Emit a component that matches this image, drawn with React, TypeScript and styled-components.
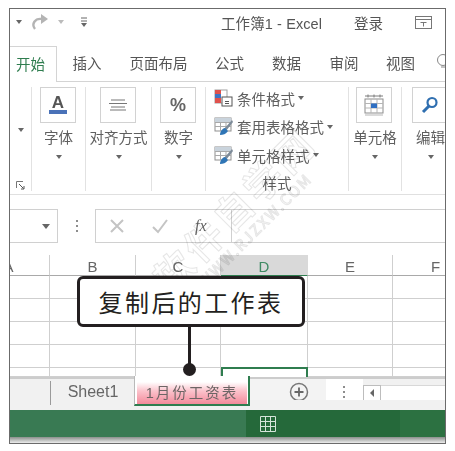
import styled, { createGlobalStyle } from "styled-components";
import { ReactNode } from "react";

const GlobalStyle = createGlobalStyle`
  html, body {
    margin: 0;
    padding: 0;
    background: #fff;
  }
  body {
    font-family: "Liberation Sans", "Noto Sans CJK SC", sans-serif;
  }
`;

const Frame = styled.div`
  position: relative;
  box-sizing: border-box;
  width: 437px;
  height: 436px;
  margin: 8px 0 0 9px;
  border: 1px solid #6b6b6b;
  background: #fff;
  overflow: hidden;
  display: flex;
  flex-direction: column;
  color: #5f5f5f;
  font-size: 14.5px;
`;

// title bar
const TitleBar = styled.div`
  height: 37px;
  flex: none;
  display: flex;
  align-items: center;
  padding: 0 0 11px 6px;
  box-sizing: border-box;
  color: #555;
`;

const Qat = styled.div`
  width: 205px;
  display: flex;
  align-items: center;
  gap: 6px;
  flex: none;
`;

const TitleText = styled.span`
  width: 133px;
  flex: none;
  letter-spacing: 0.1px;
`;

const Login = styled.span`
  width: 61px;
  flex: none;
`;

const TinyCaret = styled.span<{ $light?: boolean }>`
  width: 0;
  height: 0;
  border-left: 3px solid transparent;
  border-right: 3px solid transparent;
  border-top: 4px solid ${(p) => (p.$light ? "#bbb" : "#666")};
`;

// tabs
const TabRow = styled.div`
  height: 36px;
  flex: none;
  display: flex;
  align-items: stretch;
  border-bottom: 1px solid #d4d4d4;
  box-sizing: border-box;
`;

const Tab = styled.div<{ $w: number; $active?: boolean }>`
  width: ${(p) => p.$w}px;
  flex: none;
  display: flex;
  align-items: center;
  justify-content: center;
  box-sizing: border-box;
  padding-bottom: 3px;
  color: ${(p) => (p.$active ? "#2f7d4f" : "#555")};
  background: #fff;
  ${(p) =>
    p.$active
      ? "border-right: 1px solid #d4d4d4; border-top: 1px solid #d4d4d4; height: 36px; padding-right: 5px;"
      : ""}
`;

const TipIcon = styled.svg`
  align-self: center;
  margin: 0 0 3px 9px;
  flex: none;
`;

// ribbon
const Ribbon = styled.div`
  height: 113px;
  flex: none;
  display: flex;
  box-sizing: border-box;
  border-bottom: 1px solid #e0e0e0;
  padding: 5px 0 3px;
`;

const Group = styled.div<{ $w: number }>`
  width: ${(p) => p.$w}px;
  flex: none;
  box-sizing: border-box;
  border-right: 1px solid #e2e2e2;
  display: flex;
  flex-direction: column;
  align-items: center;
`;

const BigButton = styled.div`
  width: 36px;
  height: 36px;
  margin-right: 2px;
  box-sizing: border-box;
  border: 1px solid #d2d2d2;
  display: flex;
  align-items: center;
  justify-content: center;
  flex: none;
  color: #555;
`;

const GroupLabel = styled.div`
  margin-top: 5px;
  line-height: 20px;
  white-space: nowrap;
`;

const GroupCaret = styled(TinyCaret)`
  margin-top: 7px;
`;

const CollapsedCaret = styled(TinyCaret)`
  margin-top: 41px;
`;

const Launcher = styled.svg`
  margin-top: auto;
  margin-bottom: 1px;
`;

const StyleList = styled.div`
  display: flex;
  flex-direction: column;
  align-items: flex-start;
  width: 100%;
  padding: 1px 0 0 8px;
  box-sizing: border-box;
  gap: 8.5px;
`;

const StyleRow = styled.div`
  display: flex;
  align-items: center;
  gap: 3px;
  height: 20px;
  white-space: nowrap;
`;

const StyleCaption = styled.div`
  margin-top: auto;
  text-align: center;
  line-height: 14px;
`;

// formula bar
const FormulaRow = styled.div`
  height: 60px;
  flex: none;
  display: flex;
  align-items: flex-start;
  padding-top: 14px;
  box-sizing: border-box;
`;

const NameBox = styled.div`
  width: 48px;
  height: 34px;
  box-sizing: border-box;
  border: 1px solid #d0d0d0;
  border-left: none;
  display: flex;
  align-items: center;
  justify-content: flex-end;
  padding-right: 7px;
  flex: none;
`;

const NameCaret = styled.span`
  width: 0;
  height: 0;
  border-left: 4px solid transparent;
  border-right: 4px solid transparent;
  border-top: 5px solid #666;
`;

const Dots = styled.div`
  width: 37px;
  height: 34px;
  flex: none;
  display: flex;
  flex-direction: column;
  align-items: center;
  justify-content: center;
  gap: 3px;
`;

const Dot = styled.span`
  width: 2px;
  height: 2px;
  background: #8d8d8d;
`;

const FormulaBox = styled.div`
  flex: 1;
  height: 34px;
  box-sizing: border-box;
  border: 1px solid #d0d0d0;
  border-right: none;
  display: flex;
  align-items: stretch;
`;

const FormulaTools = styled.div`
  width: 136px;
  flex: none;
  box-sizing: border-box;
  border-right: 1px solid #d0d0d0;
  display: flex;
  align-items: center;
  padding-left: 13px;
  gap: 27px;
`;

const FxText = styled.span`
  font-family: "Liberation Serif", serif;
  font-style: italic;
  font-size: 16px;
  color: #666;
`;

// sheet grid
const Sheet = styled.div`
  height: 122px;
  flex: none;
  display: grid;
  grid-template-columns: 40px 86px 85px 87px 85px 86px;
  grid-template-rows: 21px repeat(4, 23px) 9px;
  overflow: hidden;
`;

const HeadCell = styled.div<{ $active?: boolean }>`
  box-sizing: border-box;
  padding-top: 3px;
  border-right: 1px solid ${(p) => (p.$active ? "#d9d9d9" : "#cfcfcf")};
  border-bottom: 1px solid ${(p) => (p.$active ? "#2f7d4f" : "#a9a9a9")};
  background: ${(p) => (p.$active ? "#d9d9d9" : "#fff")};
  color: ${(p) => (p.$active ? "#3f8a63" : "#666")};
  display: flex;
  align-items: center;
  justify-content: center;
  font-size: 15px;
  overflow: hidden;
`;

const ClippedLetter = styled.span`
  margin-left: -42px;
`;

const Cell = styled.div<{ $selected?: boolean }>`
  box-sizing: border-box;
  border-right: 1px solid #cfcfcf;
  border-bottom: 1px solid #cfcfcf;
  ${(p) =>
    p.$selected
      ? "border: 2px solid #2f7d4f; border-bottom: none; margin-top: -1px;"
      : ""}
`;

// sheet tabs
const SheetBar = styled.div`
  height: 33px;
  flex: none;
  box-sizing: border-box;
  display: flex;
  align-items: flex-start;
  background: #f1f1f1;
  border-top: 2px solid #cccccc;
`;

const SheetSpacer = styled.div`
  width: 41px;
  height: 24px;
  flex: none;
  margin-top: 2px;
  box-sizing: border-box;
  border-right: 1px solid #9a9a9a;
`;

const SheetTab = styled.div`
  width: 84px;
  height: 25px;
  flex: none;
  display: flex;
  align-items: center;
  justify-content: center;
  font-size: 16px;
  color: #666;
`;

const ActiveSheet = styled.div`
  width: 116px;
  flex: none;
  height: 30px;
  margin: -3px 0 0 -1px;
  box-sizing: border-box;
  background: #fff;
  padding: 6px 1px 0 2px;
  border-bottom: 2px solid #2f7d4f;
  border-left: 1px solid #b9b9b9;
  border-right: 2px solid #2f7d4f;
  display: flex;
  position: relative;
  z-index: 1;
`;

const ActiveSheetFill = styled.div`
  flex: 1;
  padding-bottom: 4px;
  background: linear-gradient(#fff 0%, #fbc3cc 40%, #f48a9b 100%);
  display: flex;
  align-items: center;
  justify-content: center;
  color: #6d6565;
  letter-spacing: 2px;
  white-space: nowrap;
`;

const AddSlot = styled.div`
  width: 76px;
  height: 21px;
  flex: none;
  display: flex;
  align-items: flex-start;
  justify-content: center;
  padding: 3px 0 0 22px;
  box-sizing: border-box;
  background: #f3f3f3;
  overflow: hidden;
`;

const DotSlot = styled.div`
  width: 37px;
  height: 21px;
  flex: none;
  background: #fff;
  display: flex;
  flex-direction: column;
  align-items: center;
  justify-content: flex-end;
  gap: 3px;
  padding: 0 2px 2px 0;
  box-sizing: border-box;
`;

const ScrollLeft = styled.div`
  width: 18px;
  height: 15px;
  flex: none;
  margin-top: 6px;
  background: #fff;
  box-sizing: border-box;
  border: 1px solid #bdbdbd;
  border-bottom: none;
  display: flex;
  align-items: center;
  justify-content: center;
`;

const ScrollArrow = styled.span`
  width: 0;
  height: 0;
  border-top: 4px solid transparent;
  border-bottom: 4px solid transparent;
  border-right: 4px solid #666;
`;

const ScrollTrack = styled.div`
  flex: 1;
  height: 15px;
  margin-top: 6px;
  background: #fff;
  border-top: 1px solid #d8d8d8;
  box-sizing: border-box;
`;

// status bar
const StatusBar = styled.div`
  height: 27px;
  flex: none;
  display: flex;
  align-items: stretch;
  background: #25693a;
`;

const StatusLeft = styled.div`
  width: 236px;
  flex: none;
  background: #397a53;
`;

const StatusView = styled.div`
  width: 154px;
  flex: none;
  display: flex;
  align-items: center;
  padding-left: 14px;
  box-sizing: border-box;
`;

const StatusRight = styled.div`
  flex: 1;
  background: #2c7141;
`;

const BottomEdge = styled.div`
  flex: 1;
  background: linear-gradient(#8b8f8c, #ececec);
`;

// things lying over the sheet
const Callout = styled.div`
  position: absolute;
  left: 67px;
  top: 267px;
  width: 228px;
  height: 51px;
  box-sizing: border-box;
  background: #fff;
  border: 3px solid #231f20;
  border-radius: 6px;
  display: flex;
  align-items: center;
  justify-content: center;
  color: #231f20;
  font-family: "Noto Sans CJK SC", sans-serif;
  font-size: 24px;
  letter-spacing: 2.4px;
  z-index: 3;
`;

const Leader = styled.div`
  position: absolute;
  left: 178px;
  top: 317px;
  width: 3px;
  height: 44px;
  background: #231f20;
  z-index: 3;
`;

const LeaderDot = styled.div`
  position: absolute;
  left: 173px;
  top: 354px;
  width: 13px;
  height: 13px;
  border-radius: 50%;
  background: #231f20;
  z-index: 3;
`;

const Watermark = styled.div`
  position: absolute;
  left: 230px;
  top: 206px;
  transform: translate(-50%, -50%) rotate(-45deg);
  white-space: nowrap;
  color: rgba(255, 255, 255, 0);
  -webkit-text-stroke: 1px #e6e6e6;
  mix-blend-mode: multiply;
  font-family: "Noto Sans CJK SC", sans-serif;
  line-height: 1;
  text-align: center;
  z-index: 2;
  pointer-events: none;
`;

const WatermarkTitle = styled.div`
  font-size: 38px;
  font-weight: 700;
  letter-spacing: 4px;
`;

const WatermarkUrl = styled.div`
  font-size: 15px;
  letter-spacing: 2px;
  margin-top: 3px;
`;

const TableIcon = () => (
  <svg width="20" height="19" viewBox="0 0 20 19">
    <rect x="1" y="1" width="16" height="13" fill="#fff" stroke="#8f8f8f" />
    <path d="M1 5.5h16M1 9.5h16M6.5 1v13M12 1v13" stroke="#a9a9a9" fill="none" />
    <rect x="1" y="1" width="16" height="4" fill="#c9d3dc" />
    <path d="M18 3 L10 12 L12 14 L19 5 Z" fill="#7d8b99" />
    <path d="M6 18 C6 14 9 11 11 11 L14 14 C12 17 9 18 6 18 Z" fill="#2f75b5" />
  </svg>
);

const CondIcon = () => (
  <svg width="20" height="19" viewBox="0 0 20 19">
    <rect x="1" y="1" width="12" height="13" fill="#fff" stroke="#a0a0a0" />
    <rect x="1" y="1" width="6" height="4" fill="#e0524d" />
    <rect x="1" y="5" width="6" height="4" fill="#3f74c4" />
    <rect x="1" y="9" width="6" height="5" fill="#e0524d" />
    <rect x="8" y="8" width="10" height="9" fill="#fff" stroke="#555" />
    <path d="M11 12.5h4M11 14.5h4" stroke="#555" />
  </svg>
);

const CellIcon = () => (
  <svg width="24" height="24" viewBox="0 0 24 24">
    <path d="M3 3h18M6 1.5v3M12 1.5v3M18 1.5v3" stroke="#7c7c7c" fill="none" />
    <rect x="3" y="6" width="18" height="14" fill="#fff" stroke="#8c8c8c" />
    <path d="M3 10.5h18M3 15h18M9 6v14M15 6v14" stroke="#b5b5b5" />
    <rect x="9" y="10.5" width="6" height="4.5" fill="#2f6fc2" />
    <path d="M3 22h18" stroke="#b5b5b5" />
  </svg>
);

const StyleItem = ({ icon, children }: { icon: ReactNode; children: ReactNode }) => (
  <StyleRow>
    {icon}
    <span>{children}</span>
    <TinyCaret />
  </StyleRow>
);

export default function App() {
  const cols = ["", "B", "C", "D", "E", "F"];
  const rows = [0, 1, 2, 3, 4];

  return (
    <>
      <GlobalStyle />
      <Frame>
        <TitleBar>
          <Qat>
            <TinyCaret />
            <svg width="24" height="20" viewBox="0 0 24 20" fill="none">
              <path d="M7 17 C3 12 7 6 14 7" stroke="#b4b4b4" strokeWidth="2.4" />
              <path d="M13 2 L20 7 L13 12 Z" fill="#b4b4b4" />
            </svg>
            <TinyCaret $light />
            <svg width="8" height="10" viewBox="0 0 8 10" style={{ marginLeft: 10 }}>
              <path d="M1 1h6M1 4h6" stroke="#666" />
              <path d="M1 6h6L4 10Z" fill="#666" />
            </svg>
          </Qat>
          <TitleText>工作簿1 - Excel</TitleText>
          <Login>登录</Login>
          <svg width="17" height="13" viewBox="0 0 17 13" fill="none">
            <rect x="0.5" y="0.5" width="16" height="12" stroke="#777" />
            <path d="M0.5 3.5h16M5.5 6.5h6M8.5 6.5v4" stroke="#777" />
          </svg>
        </TitleBar>

        <TabRow>
          <Tab $w={47} $active>开始</Tab>
          <Tab $w={60}>插入</Tab>
          <Tab $w={83}>页面布局</Tab>
          <Tab $w={59}>公式</Tab>
          <Tab $w={55}>数据</Tab>
          <Tab $w={60}>审阅</Tab>
          <Tab $w={53}>视图</Tab>
          <TipIcon width="14" height="18" viewBox="0 0 14 18" fill="none">
            <circle cx="7" cy="7" r="5.5" stroke="#888" />
            <path d="M5 14h4" stroke="#888" />
          </TipIcon>
        </TabRow>

        <Ribbon>
          <Group $w={22}>
            <CollapsedCaret />
            <Launcher width="9" height="9" viewBox="0 0 9 9" fill="none">
              <path d="M0.500 7V0.500H7" stroke="#777" />
              <path d="M3 3 L7.500 7.500M5 8h3V5" stroke="#555" />
            </Launcher>
          </Group>
          <Group $w={54}>
            <BigButton>
              <svg width="20" height="24" viewBox="0 0 20 24">
                <text x="10" y="15" textAnchor="middle" fontSize="17" fontWeight="700" fontFamily="Liberation Sans" fill="#555">A</text>
                <rect x="1" y="17" width="18" height="4" fill="#4a72b8" />
              </svg>
            </BigButton>
            <GroupLabel>字体</GroupLabel>
            <GroupCaret />
          </Group>
          <Group $w={66}>
            <BigButton>
              <svg width="18" height="12" viewBox="0 0 18 12">
                <path d="M2 1h14M0 4.500h18M2 8h14M1 11h16" stroke="#777" />
              </svg>
            </BigButton>
            <GroupLabel>对齐方式</GroupLabel>
            <GroupCaret />
          </Group>
          <Group $w={54}>
            <BigButton>
              <svg width="22" height="20" viewBox="0 0 22 20">
                <text x="11" y="16" textAnchor="middle" fontSize="18" fontWeight="700" fontFamily="Liberation Sans" fill="#666">%</text>
              </svg>
            </BigButton>
            <GroupLabel>数字</GroupLabel>
            <GroupCaret />
          </Group>
          <Group $w={143}>
            <StyleList>
              <StyleItem icon={<CondIcon />}>条件格式</StyleItem>
              <StyleItem icon={<TableIcon />}>套用表格格式</StyleItem>
              <StyleItem icon={<TableIcon />}>单元格样式</StyleItem>
            </StyleList>
            <StyleCaption>样式</StyleCaption>
          </Group>
          <Group $w={53}>
            <BigButton>
              <CellIcon />
            </BigButton>
            <GroupLabel>单元格</GroupLabel>
            <GroupCaret />
          </Group>
          <Group $w={58}>
            <BigButton>
              <svg width="18" height="18" viewBox="0 0 18 18" fill="none">
                <circle cx="11" cy="6.500" r="4.500" stroke="#2f6fb0" strokeWidth="2.200" />
                <path d="M8 10 L2 16" stroke="#2f6fb0" strokeWidth="3" />
              </svg>
            </BigButton>
            <GroupLabel>编辑</GroupLabel>
            <GroupCaret />
          </Group>
        </Ribbon>

        <FormulaRow>
          <NameBox>
            <NameCaret />
          </NameBox>
          <Dots>
            <Dot />
            <Dot />
            <Dot />
          </Dots>
          <FormulaBox>
            <FormulaTools>
              <svg width="16" height="16" viewBox="0 0 16 16">
                <path d="M2 2 L14 14 M14 2 L2 14" stroke="#c4c4c4" strokeWidth="2" />
              </svg>
              <svg width="16" height="16" viewBox="0 0 16 16" fill="none">
                <path d="M1 9 L6 14 L15 2" stroke="#c4c4c4" strokeWidth="2" />
              </svg>
              <FxText>fx</FxText>
            </FormulaTools>
          </FormulaBox>
        </FormulaRow>

        <Sheet>
          {cols.map((c, i) => (
            <HeadCell key={i} $active={c === "D"}>
              {i === 0 ? <ClippedLetter>A</ClippedLetter> : c}
            </HeadCell>
          ))}
          {rows.map((r) =>
            cols.map((c, i) => <Cell key={`${r}-${i}`} $selected={r === 4 && c === "D"} />)
          )}
        </Sheet>

        <SheetBar>
          <SheetSpacer />
          <SheetTab>Sheet1</SheetTab>
          <ActiveSheet>
            <ActiveSheetFill>1月份工资表</ActiveSheetFill>
          </ActiveSheet>
          <AddSlot>
            <svg width="20" height="20" viewBox="0 0 20 20" fill="none">
              <circle cx="10" cy="10" r="8.500" stroke="#777" strokeWidth="1.500" />
              <path d="M5.500 10h9M10 5.500v9" stroke="#666" strokeWidth="1.800" />
            </svg>
          </AddSlot>
          <DotSlot>
            <Dot />
            <Dot />
            <Dot />
          </DotSlot>
          <ScrollLeft>
            <ScrollArrow />
          </ScrollLeft>
          <ScrollTrack />
        </SheetBar>

        <StatusBar>
          <StatusLeft />
          <StatusView>
            <svg width="16" height="16" viewBox="0 0 16 16" fill="none">
              <path d="M0.500 0.500h15v15h-15z M0.500 5.500h15 M0.500 10.500h15 M5.500 0.500v15 M10.500 0.500v15" stroke="#d5e5da" />
            </svg>
          </StatusView>
          <StatusRight />
        </StatusBar>
        <BottomEdge />

        <Watermark>
          <WatermarkTitle>软件自学网</WatermarkTitle>
          <WatermarkUrl>WWW.RJZXW.COM</WatermarkUrl>
        </Watermark>
        <Callout>复制后的工作表</Callout>
        <Leader />
        <LeaderDot />
      </Frame>
    </>
  );
}
